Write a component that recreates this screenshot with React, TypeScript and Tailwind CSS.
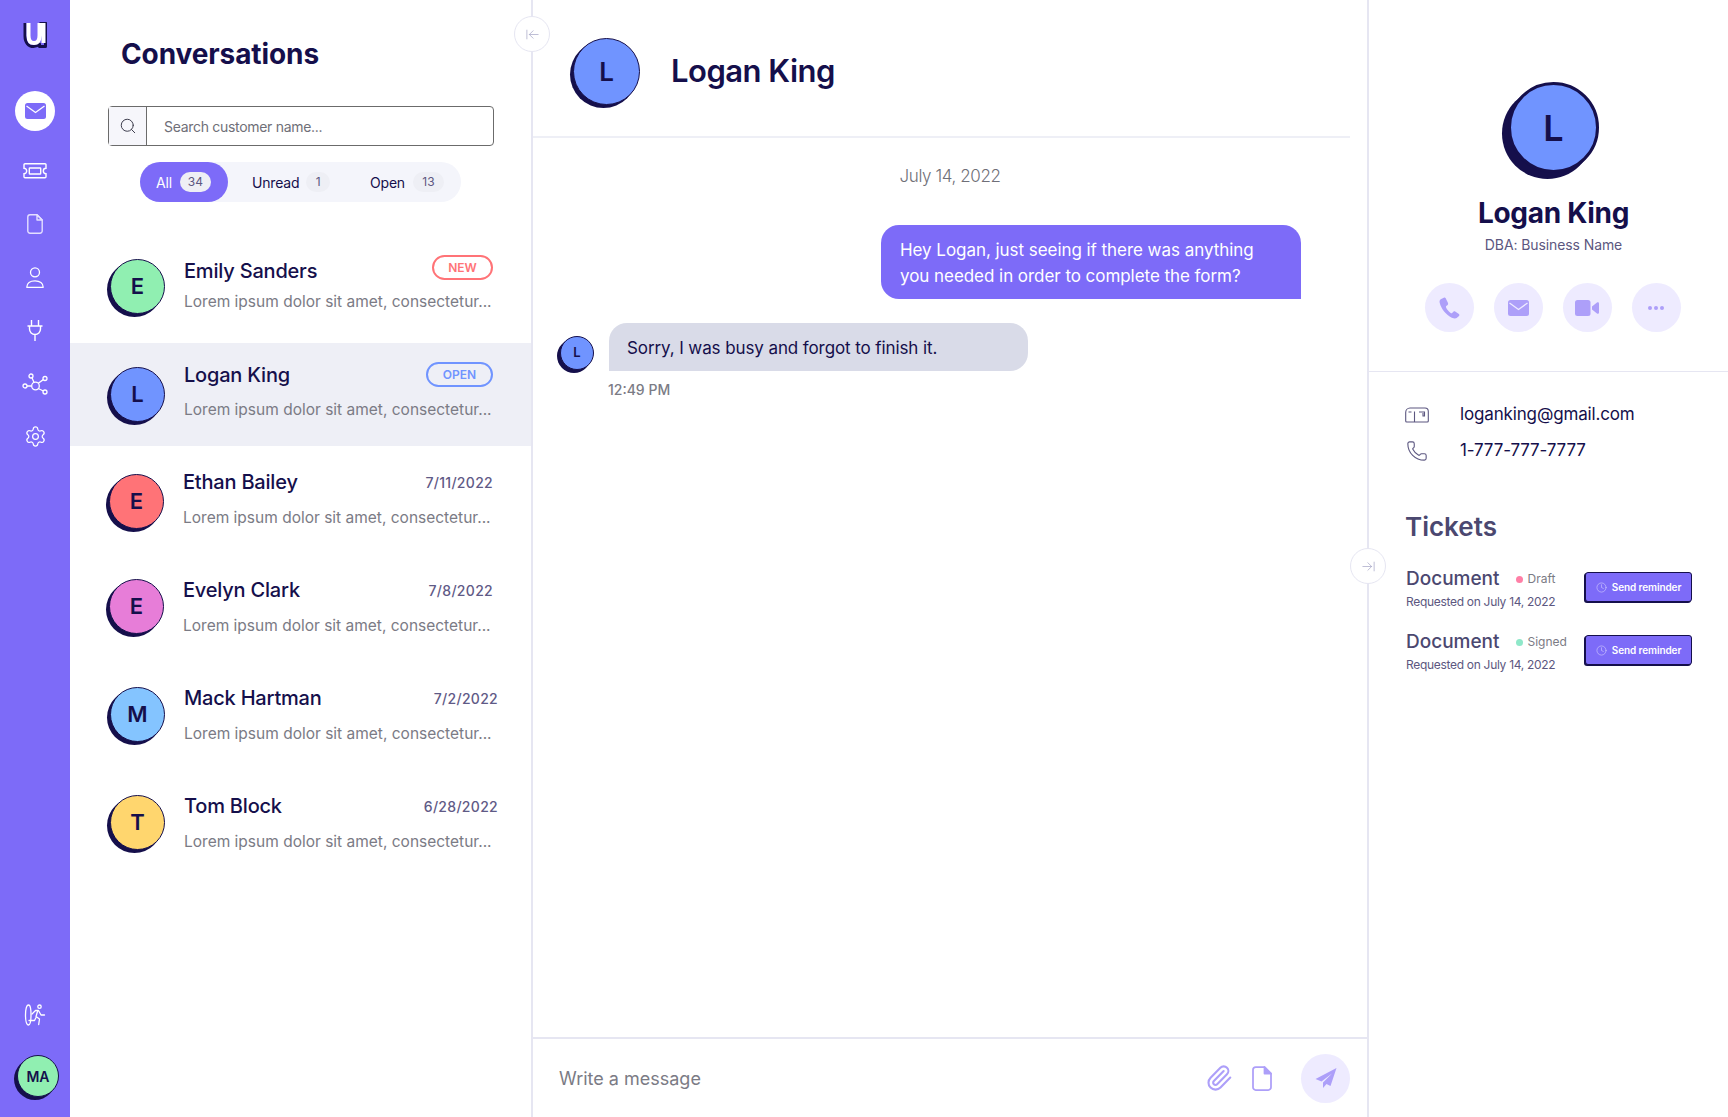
import { Search, Settings, Phone, Clock, Paperclip, ArrowLeftToLine, ArrowRightToLine } from 'lucide-react'
import type { ReactNode } from 'react'

const font = { fontFamily: '"Inter", "Liberation Sans", sans-serif' }

interface Conversation {
    name: string
    initial: string
    color: string
    date?: string
    badge?: 'NEW' | 'OPEN'
    active?: boolean
    rowClass: string
    avatarClass: string
    nameClass: string
    dateClass?: string
}

const conversations: Conversation[] = [
    { name: 'Emily Sanders', initial: 'E', color: 'bg-[#90efb1]', badge: 'NEW', rowClass: 'pl-[40px]', avatarClass: '', nameClass: 'mb-[3px]' },
    { name: 'Logan King', initial: 'L', color: 'bg-[#7094ff]', badge: 'OPEN', active: true, rowClass: 'pl-[40px]', avatarClass: '', nameClass: 'mb-[9px]' },
    { name: 'Ethan Bailey', initial: 'E', color: 'bg-[#ff7377]', date: '7/11/2022', rowClass: 'pl-[39px]', avatarClass: 'mb-[2px]', nameClass: 'mb-[10px]' },
    { name: 'Evelyn Clark', initial: 'E', color: 'bg-[#e77dd8]', date: '7/8/2022', rowClass: 'pl-[39px]', avatarClass: 'mb-[8px]', nameClass: 'mb-[10px]' },
    { name: 'Mack Hartman', initial: 'M', color: 'bg-[#84c4ff]', date: '7/2/2022', rowClass: 'pl-[40px]', avatarClass: 'mb-[8px]', nameClass: 'mb-[10px]', dateClass: 'mr-[-5px]' },
    { name: 'Tom Block', initial: 'T', color: 'bg-[#ffd66e]', date: '6/28/2022', rowClass: 'pl-[40px]', avatarClass: 'mb-[8px]', nameClass: 'mb-[10px]', dateClass: 'mr-[-5px]' },
]

const Avatar = ({ initial, color, className, shadow = 'border shadow-[-3px_3px_0_#150f4b]' }: { initial: string; color: string; className: string; shadow?: string }) => (
    <div className={`flex shrink-0 items-center justify-center rounded-full border-[#150f4b] font-semibold text-[#150f4b] ${shadow} ${color} ${className}`}>
        {initial}
    </div>
)

const TicketIcon = () => (
    <svg className="block" width="24" height="16" viewBox="0 0 24 16" fill="none" stroke="#fff" strokeWidth="1.4">
        <path d="M2 .8h20a1 1 0 0 1 1 1v3.500a2.700 2.700 0 0 0 0 5.400v3a1 1 0 0 1-1 1H2a1 1 0 0 1-1-1v-3a2.700 2.700 0 0 0 0-5.400V1.800a1 1 0 0 1 1-1z" />
        <rect x="6.300" y="5" width="11.400" height="6" rx=".6" />
    </svg>
)

const FileIcon = ({ stroke, width, height, filled }: { stroke: string; width: number; height: number; filled?: boolean }) => (
    <svg className="block" width={width} height={height} viewBox="0 0 16 20" fill="none" stroke={stroke} strokeWidth="1.400" strokeLinejoin="round">
        <path d="M3 .8h7l5.200 5.200V17a2.200 2.200 0 0 1-2.200 2.200H3A2.200 2.200 0 0 1 .8 17V3A2.200 2.200 0 0 1 3 .8z" />
        <path d="M10 .8V6h5.200z" fill={filled ? stroke : 'none'} />
    </svg>
)

const UserIcon = () => (
    <svg className="block" width="18" height="21" viewBox="0 0 18 21" fill="none" stroke="#fff" strokeWidth="1.300">
        <circle cx="9" cy="5.300" r="4.500" />
        <path d="M.8 20.300c0-4 3.300-6.500 8.200-6.500s8.200 2.500 8.200 6.500z" strokeLinejoin="round" />
    </svg>
)

const PlugIcon = () => (
    <svg className="block" width="16" height="21" viewBox="0 0 16 21" fill="none" stroke="#fff" strokeWidth="1.400">
        <path d="M4.500 0v5.500M11.500 0v5.500M.5 6h15M2.500 6v3a5.500 5.500 0 0 0 11 0V6M8 14.500V21" />
    </svg>
)

const NetworkIcon = () => (
    <svg className="block" width="26" height="22" viewBox="0 0 26 22" fill="none" stroke="#fff" strokeWidth="1.300">
        <circle cx="13.500" cy="13" r="3.800" />
        <circle cx="9" cy="3" r="2" />
        <circle cx="23" cy="5.500" r="2" />
        <circle cx="3" cy="13" r="2" />
        <circle cx="23" cy="19" r="2" />
        <path d="M10 4.800l2 4.600M21.300 6.600l-5 3.600M5 13h4.700M21.300 18l-5-2.500" />
    </svg>
)

const ExitIcon = () => (
    <svg className="block" width="22" height="22" viewBox="0 0 22 22" fill="none" stroke="#fff" strokeWidth="1.300" strokeLinecap="round" strokeLinejoin="round">
        <path d="M4.500 1c-2 0-3 4.500-3 10s1 10 3 10 2.500-4.500 2.500-10S6.500 1 4.500 1z" />
        <circle cx="15.500" cy="2.700" r="1.700" />
        <path d="M8 10l3.500-3.500h3l2.500 4.500h3.500M13.500 7.500l-1.500 5 3.500 2.500-.8 5.500M12 13.500l-1.500 3H5" />
    </svg>
)

const MailboxIcon = () => (
    <svg className="block w-6" width="24" height="16" viewBox="0 0 24 16" fill="none" stroke="#5c5780" strokeWidth="1.100">
        <path d="M5 1h15a3.500 3.500 0 0 1 3.300 3.500V14a1 1 0 0 1-1 1H1.700a1 1 0 0 1-1-1V5.500A4.500 4.500 0 0 1 5 1z" />
        <path d="M9.500 4.500V15M3.500 5h3M14 5h5.500v4h-1.500V6" />
    </svg>
)

const SendIcon = () => (
    <svg className="block" width="22" height="22" viewBox="0 0 22 22" fill="#ad9ff9">
        <path d="M21.500 1 .5 12l6 2.500L17 6.500 8 15.500V21l3.500-4 4 2z" />
    </svg>
)

const FilledPhone = () => (
    <svg className="block" width="21" height="22" viewBox="0 0 21 22" fill="#ad9ff9">
        <path d="M4.800.7 1.700 2.300C.6 3 .3 4.300.8 6.300c1.300 5.300 6.300 11.700 12 14.400 2.200 1 3.900 1 4.900.3l2.300-2.100c.6-.6.500-1.400-.1-1.900l-3.700-2.400c-.6-.4-1.300-.3-1.800.2l-1.300 1.300c-.3.300-.7.300-1.100.1-2-1.300-4.200-3.800-5-6-.2-.5 0-.9.300-1.200l1.400-1.100c.5-.5.600-1.200.3-1.800L6.700 1.300C6.300.5 5.500.3 4.800.7z" />
    </svg>
)

const FilledMail = ({ fill, line }: { fill: string; line: string }) => (
    <svg className="block" width="21" height="16" viewBox="0 0 21 16" fill={fill}>
        <rect width="21" height="16" rx="2.500" />
        <path d="M1.500 3 10.500 9.500 19.500 3" fill="none" stroke={line} strokeWidth="1.300" />
    </svg>
)

const FilledVideo = () => (
    <svg className="block" width="24" height="16" viewBox="0 0 24 16" fill="#ad9ff9">
        <rect width="15.500" height="16" rx="2.500" />
        <path d="M17 6.500 22 2.500c.8-.6 2-.1 2 1v9c0 1.100-1.200 1.600-2 1L17 9.500z" />
    </svg>
)

const Sidebar = () => (
    <aside className="flex w-[70px] shrink-0 flex-col items-center bg-[#7d6bf8] pb-[20px]">
        <svg className="mt-[22px] block" width="24" height="26" viewBox="0 0 24 26" fill="none">
            <path d="M2 1v13c0 6.500 3.500 10.500 8.500 10.500 2.500 0 4.500-1 6-2.500v2.500h6V1h-6" stroke="#150f4b" strokeWidth="3" strokeLinejoin="round" />
            <path d="M5.500 1v12.500c0 5 2 7.500 5.500 7.500s5.500-2.500 5.500-7.500V1M20.500 1v20" stroke="#fff" strokeWidth="4" />
        </svg>
        <div className="mt-[43px] flex h-10 w-10 items-center justify-center rounded-full bg-white">
            <FilledMail fill="#7d6bf8" line="#fff" />
        </div>
        <nav className="flex flex-col items-center">
            <div className="mt-[32px]"><TicketIcon /></div>
            <div className="mt-[35px]"><FileIcon stroke="#e4dfff" width={16} height={20} /></div>
            <div className="mt-[33px]"><UserIcon /></div>
            <div className="mt-[32px]"><PlugIcon /></div>
            <div className="mt-[32px]"><NetworkIcon /></div>
            <Settings className="mt-[30px] text-white" size={23} strokeWidth={1.300} />
        </nav>
        <div className="mt-auto"><ExitIcon /></div>
        <Avatar initial="MA" color="bg-[#90efb1]" className="ml-[6px] mt-[29px] h-[42px] w-[42px] text-[14px]" />
    </aside>
)

const Filter = ({ label, count, active, className }: { label: string; count: string; active?: boolean; className: string }) => (
    <div className={`flex h-10 items-center gap-2 rounded-full text-[14px] tracking-[-0.2px] ${active ? 'bg-[#7d6bf8] text-white' : 'text-[#150f4b]'} ${className}`}>
        <span>{label}</span>
        <span className={`flex h-5 items-center justify-center rounded-full text-[12px] tracking-normal bg-[#eeeff5] text-[#5c5780] ${count === '1' ? 'ml-[-1px] w-[24px]' : 'w-[31px]'}`}>{count}</span>
    </div>
)

const ConversationRow = ({ item }: { item: Conversation }) => (
    <div className={`flex h-[103px] items-center pr-[38px] ${item.rowClass} ${item.active ? 'bg-[#eeeff6]' : ''}`}>
        <Avatar initial={item.initial} color={item.color} className={`h-[55px] w-[55px] text-[22px] ${item.avatarClass}`} />
        <div className="ml-[19px] flex h-full min-w-0 flex-1 flex-col justify-end pb-[24px]">
            <div className={`flex items-center justify-between ${item.nameClass}`}>
                <span className="text-[20px] font-medium leading-[28px] tracking-[-0.2px] text-[#150f4b]">{item.name}</span>
                {item.badge === 'NEW' && <span className="mb-[7px] flex h-[25px] w-[61px] items-center justify-center rounded-full border-2 border-[#ff7377] text-[12px] font-semibold text-[#ff7377]">NEW</span>}
                {item.badge === 'OPEN' && <span className="mb-[1px] flex h-[25px] w-[67px] items-center justify-center rounded-full border-2 border-[#7094ff] text-[12px] font-semibold text-[#7094ff]">OPEN</span>}
                {item.date && <span className={`text-[14px] font-medium tracking-[0.3px] text-[#5f5a86] ${item.dateClass ?? ''}`}>{item.date}</span>}
            </div>
            <p className="whitespace-nowrap text-[15.5px] leading-[24px] text-[#7b7b85]">Lorem ipsum dolor sit amet, consectetur...</p>
        </div>
    </div>
)

const ListPanel = () => (
    <section className="relative flex w-[463px] shrink-0 flex-col border-r-2 border-[#e6e6f2]">
        <h1 className="ml-[51px] mt-[34px] text-[28px] font-bold leading-[40px] tracking-[-0.1px] text-[#150f4b]">Conversations</h1>
        <div className="ml-[38px] mt-[32px] flex h-10 w-[386px] rounded border border-[#6b6b6b]">
            <div className="flex w-[38px] items-center justify-center border-r border-[#6b6b6b] bg-[#f6f6fb]">
                <Search size={18} className="text-[#3a3a4a]" strokeWidth={1.300} />
            </div>
            <div className="flex items-center pl-[17px] text-[14px] tracking-[-0.3px] text-[#6f6f78]">Search customer name...</div>
        </div>
        <div className="ml-[70px] mt-[16px] flex w-fit rounded-full bg-[#f4f5fb]">
            <Filter label="All" count="34" active className="w-[88px] pl-[16px]" />
            <Filter label="Unread" count="1" className="w-[122px] pl-[24px]" />
            <Filter label="Open" count="13" className="w-[111px] pl-[20px]" />
        </div>
        <div className="mt-[33px] flex flex-col gap-[5px]">
            {conversations.map((item) => (
                <ConversationRow key={item.name} item={item} />
            ))}
        </div>
        <button className="absolute right-[-19px] top-[16px] z-10 flex h-9 w-9 items-center justify-center rounded-full border border-[#e6e6f2] bg-white text-[#a9a9c8]">
            <ArrowLeftToLine size={15} strokeWidth={1.200} />
        </button>
    </section>
)

const ChatPanel = () => (
    <main className="flex min-w-0 flex-1 flex-col">
        <header className="mr-[17px] flex h-[138px] shrink-0 items-center border-b-2 border-[#eeeff6] pl-[40px] pt-[7px]">
            <Avatar initial="L" color="bg-[#7094ff]" className="h-[67px] w-[67px] text-[26px]" />
            <h2 className="ml-[31px] text-[31px] font-semibold tracking-[-0.5px] text-[#150f4b]">Logan King</h2>
        </header>
        <div className="flex-1 pt-[24px]">
            <p className="text-center text-[17px] font-light leading-[28px] tracking-[-0.4px] text-[#6f6f78]">July 14, 2022</p>
            <div className="mr-[66px] mt-[35px] flex justify-end">
                <div className="w-[420px] rounded-[18px] rounded-br-none bg-[#7d6bf8] pb-[10px] pl-[19px] pr-[18px] pt-[12px] text-[17px] leading-[26px] tracking-[-0.05px] text-white">
                    Hey Logan, just seeing if there was anything<br />you needed in order to complete the form?
                </div>
            </div>
            <div className="ml-[27px] mt-[24px] flex items-start">
                <Avatar initial="L" color="bg-[#7094ff]" className="mt-[13px] h-[34px] w-[34px] text-[13px]" />
                <div className="ml-[15px] flex h-[48px] w-[419px] items-center rounded-[18px] rounded-bl-none bg-[#d9dbe8] px-[18px] pt-[3px] text-[17px] tracking-[-0.1px] text-[#150f4b]">
                    Sorry, I was busy and forgot to finish it.
                </div>
            </div>
            <p className="ml-[75px] mt-[8px] text-[14px] font-medium text-[#7b7b85]">12:49 PM</p>
        </div>
        <footer className="flex h-[80px] shrink-0 items-center border-t-2 border-[#e6e6f2] pl-[26px] pr-[17px]">
            <span className="text-[18px] text-[#7b7b85]">Write a message</span>
            <Paperclip className="ml-auto text-[#ad9ff9]" size={28} strokeWidth={1.800} />
            <div className="ml-[19px]"><FileIcon stroke="#ad9ff9" width={20} height={25} filled /></div>
            <div className="ml-[29px] flex h-[49px] w-[49px] items-center justify-center rounded-full bg-[#eeebff]"><SendIcon /></div>
        </footer>
    </main>
)

const ActionButton = ({ children }: { children: ReactNode }) => (
    <div className="flex h-[49px] w-[49px] items-center justify-center rounded-full bg-[#eeebff]">{children}</div>
)

const TicketRow = ({ status, dot }: { status: string; dot: string }) => (
    <div className="flex items-center justify-between">
        <div>
            <div className="flex items-center">
                <span className="text-[19px] font-medium leading-[24px] text-[#4b4870]">Document</span>
                <span className={`ml-[16px] h-[7px] w-[7px] rounded-full ${dot}`} />
                <span className="ml-[5px] text-[12px] text-[#7b7b85]">{status}</span>
            </div>
            <p className="mt-[2px] text-[12px] font-normal leading-[18px] tracking-[-0.3px] text-[#5c5780]">Requested on July 14, 2022</p>
        </div>
        <button className="mb-[4px] flex h-[30px] w-[107px] items-center justify-center gap-[5px] rounded-[3px] border border-[#150f4b] bg-[#7d6bf8] text-[10px] font-semibold tracking-[-0.1px] text-white shadow-[-1px_1px_0_#150f4b]">
            <Clock size={11} strokeWidth={1.200} className="text-[#dcd6ff]" />
            Send reminder
        </button>
    </div>
)

const DetailsPanel = () => (
    <aside className="relative flex w-[361px] shrink-0 flex-col border-l-2 border-[#e6e6f2]">
        <div className="flex h-[372px] shrink-0 flex-col items-center border-b border-[#e6e6f2] pl-[10px] pt-[82px]">
            <Avatar initial="L" color="bg-[#7094ff]" className="h-[91px] w-[91px] text-[36px]" shadow="border-[3px] shadow-[-6px_6px_0_#150f4b]" />
            <h2 className="mt-[20px] text-[28px] font-bold leading-[40px] tracking-[-0.3px] text-[#150f4b]">Logan King</h2>
            <p className="mt-[2px] text-[14px] leading-[20px] tracking-[-0.1px] text-[#5c5780]">DBA: Business Name</p>
            <div className="mr-[2px] mt-[28px] flex gap-5">
                <ActionButton><FilledPhone /></ActionButton>
                <ActionButton><FilledMail fill="#ad9ff9" line="#eeebff" /></ActionButton>
                <ActionButton><FilledVideo /></ActionButton>
                <ActionButton>
                    <svg className="block" width="16" height="4" viewBox="0 0 16 4" fill="#ad9ff9">
                        <circle cx="2" cy="2" r="2" />
                        <circle cx="8" cy="2" r="2" />
                        <circle cx="14" cy="2" r="2" />
                    </svg>
                </ActionButton>
            </div>
        </div>
        <div className="pl-[36px] pt-[30px]">
            <div className="flex h-[26px] items-center gap-[31px] text-[17px] tracking-[-0.15px] text-[#150f4b]">
                <MailboxIcon />
                <span>loganking@gmail.com</span>
            </div>
            <div className="mt-[10px] flex h-[26px] items-center gap-[31px] text-[17px] tracking-[-0.15px] text-[#150f4b]">
                <Phone className="w-6 text-[#5c5780]" size={22} strokeWidth={1.200} />
                <span>1-777-777-7777</span>
            </div>
        </div>
        <h3 className="ml-[36px] mt-[43px] text-[26px] font-semibold leading-[40px] text-[#4b4870]">Tickets</h3>
        <div className="ml-[37px] mr-[36px] mt-[20px] flex flex-col gap-[19px]">
            <TicketRow status="Draft" dot="bg-[#ff7fa6]" />
            <TicketRow status="Signed" dot="bg-[#8fe8c9]" />
        </div>
        <button className="absolute left-[-19px] top-[548px] flex h-9 w-9 items-center justify-center rounded-full border border-[#e6e6f2] bg-white text-[#a9a9c8]">
            <ArrowRightToLine size={15} strokeWidth={1.200} />
        </button>
    </aside>
)

const App = () => {
    return (
        <div className="flex h-[1117px] w-[1728px] overflow-hidden bg-white" style={font}>
            <Sidebar />
            <ListPanel />
            <ChatPanel />
            <DetailsPanel />
        </div>
    )
}

export default App
